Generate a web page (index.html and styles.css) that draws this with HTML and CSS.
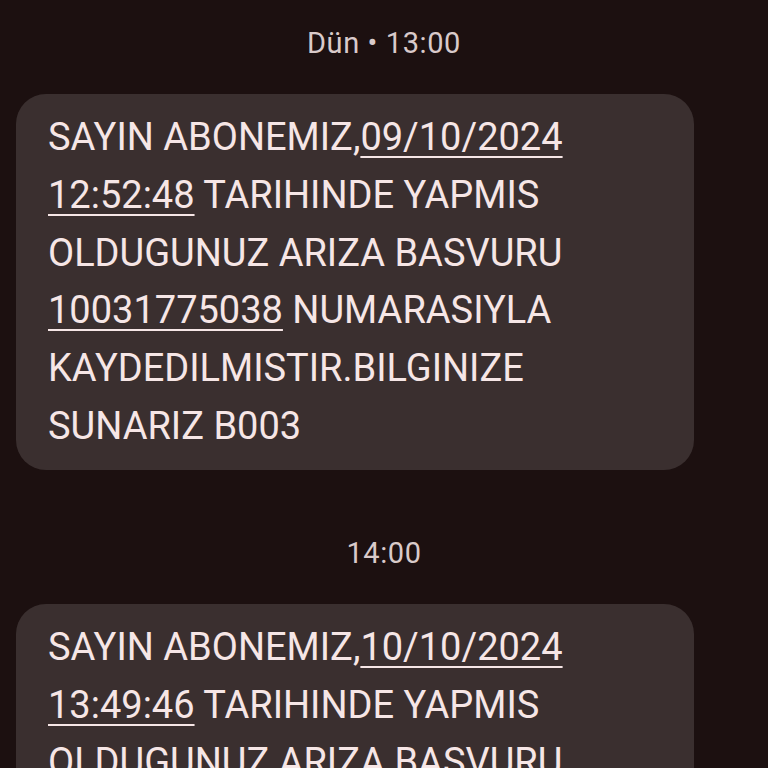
FILE: index.html
```html
<!DOCTYPE html>
<html lang="tr">
<head>
<meta charset="utf-8">
<link rel="stylesheet" href="styles.css">
</head>
<body>
<main class="thread">
  <div class="stamp">Dün • 13:00</div>
  <div class="bubble">SAYIN ABONEMIZ,<span class="link">09/10/2024 12:52:48</span> TARIHINDE YAPMIS OLDUGUNUZ ARIZA BASVURU <span class="link">10031775038</span> NUMARASIYLA KAYDEDILMISTIR.BILGINIZE SUNARIZ B003</div>
  <div class="stamp">14:00</div>
  <div class="bubble">SAYIN ABONEMIZ,<span class="link">10/10/2024 13:49:46</span> TARIHINDE YAPMIS OLDUGUNUZ ARIZA BASVURU <span class="link">10031812345</span> NUMARASIYLA KAYDEDILMISTIR.BILGINIZE SUNARIZ B003</div>
</main>
</body>
</html>
```
FILE: styles.css
```css
html, body {
  margin: 0;
  padding: 0;
  background: #1c1010;
  height: 100%;
  overflow: hidden;
}
.thread {
  display: flex;
  flex-direction: column;
  align-items: flex-start;
  padding: 24px 16px 0 16px;
  font-family: Roboto, "Noto Sans", sans-serif;
}
.stamp {
  align-self: center;
  color: #d9caca;
  font-size: 29px;
  letter-spacing: 0.6px;
  line-height: 38px;
  margin-bottom: 32px;
}
.bubble {
  box-sizing: border-box;
  width: 678px;
  background: #3a2f2f;
  border-radius: 30px;
  padding: 15px 32px 14px 32px;
  color: #f6e6e6;
  font-size: 38px;
  line-height: 57.8px;
  margin-bottom: 64px;
}
.link {
  text-decoration: underline;
  text-decoration-thickness: 2px;
  text-underline-offset: 6px;
}
```
